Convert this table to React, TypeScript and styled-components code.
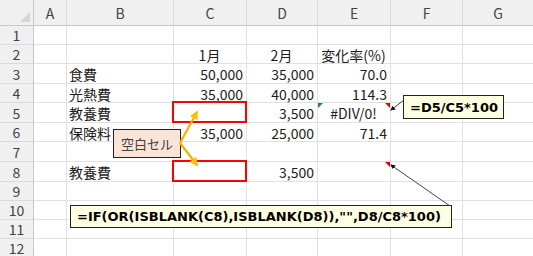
import { type FC } from "react"
import styled, { createGlobalStyle, css } from "styled-components"

const GlobalStyle = createGlobalStyle`
  html, body {
    margin: 0;
    padding: 0;
    background: #ffffff;
    overflow: hidden;
  }
`

const COLS = ["A", "B", "C", "D", "E", "F", "G"]
const ROW_HEIGHTS = [19, 19, 20, 19, 20, 19, 20, 20, 19, 19, 19, 19]

type Align = "left" | "right" | "center"

type CellData = {
  text?: string
  align?: Align
  frame?: boolean
  comment?: boolean
  error?: boolean
}

// one entry per row, columns A..G
const DATA: CellData[][] = [
  [],
  [{}, {}, { text: "1月", align: "center" }, { text: "2月", align: "center" }, { text: "変化率(%)", align: "center" }],
  [{}, { text: "食費" }, { text: "50,000", align: "right" }, { text: "35,000", align: "right" }, { text: "70.0", align: "right" }],
  [{}, { text: "光熱費" }, { text: "35,000", align: "right" }, { text: "40,000", align: "right" }, { text: "114.3", align: "right" }],
  [
    {},
    { text: "教養費" },
    { frame: true },
    { text: "3,500", align: "right" },
    { text: "#DIV/0!", align: "center", comment: true, error: true },
  ],
  [{}, { text: "保険料" }, { text: "35,000", align: "right" }, { text: "25,000", align: "right" }, { text: "71.4", align: "right" }],
  [],
  [{}, { text: "教養費" }, { frame: true }, { text: "3,500", align: "right" }, { comment: true }],
  [],
  [],
  [],
  [],
]

const Sheet = styled.div`
  position: relative;
  display: grid;
  grid-template-columns: 34px 33px 107px 73px 71px 73px 72px 71px;
  grid-template-rows: 26px ${ROW_HEIGHTS.map(h => `${h}px`).join(" ")};
  width: 534px;
  font-family: "Noto Sans CJK JP", "Noto Sans", sans-serif;
`

const Corner = styled.div`
  position: relative;
  background: #f0f0f0;
  border-right: 1px solid #c8c8c8;
  border-bottom: 1px solid #c8c8c8;

  &::after {
    content: "";
    position: absolute;
    right: 3px;
    bottom: 3px;
    border-left: 10px solid transparent;
    border-bottom: 10px solid #d6d6d6;
  }
`

const ColHead = styled.div`
  display: flex;
  align-items: center;
  justify-content: center;
  background: #f0f0f0;
  border-right: 1px solid #dadada;
  border-bottom: 1px solid #c8c8c8;
  color: #444444;
  font-size: 14px;
  padding-top: 1px;
`

const RowHead = styled.div`
  display: flex;
  align-items: center;
  justify-content: center;
  background: #f0f0f0;
  border-right: 1px solid #c8c8c8;
  border-bottom: 1px solid #dadada;
  color: #444444;
  font-size: 14px;
`

const Cell = styled.div<{ $align: Align; $frame?: boolean; $comment?: boolean }>`
  position: relative;
  display: flex;
  align-items: center;
  justify-content: ${p => (p.$align === "right" ? "flex-end" : p.$align === "center" ? "center" : "flex-start")};
  padding: 1px 3px 0 2px;
  border-right: 1px solid #e1e1e1;
  border-bottom: 1px solid #e1e1e1;
  color: #1c1c1c;
  font-size: 14px;
  white-space: nowrap;

  ${p =>
    p.$frame &&
    css`
      &::after {
        content: "";
        position: absolute;
        left: -2px;
        top: -2px;
        right: -1px;
        bottom: -1px;
        border: 2px solid #ff0000;
        z-index: 1;
      }
    `}

  ${p =>
    p.$comment &&
    css`
      &::before {
        content: "";
        position: absolute;
        top: 0;
        right: 0;
        border-left: 5px solid transparent;
        border-top: 5px solid #e00000;
      }
    `}
`

const ErrorMark = styled.span`
  position: absolute;
  top: 0;
  left: 0;
  border-right: 5px solid transparent;
  border-top: 5px solid #1e8c2e;
`

const Callout = styled.div<{ $tone: "note" | "peach" }>`
  position: absolute;
  z-index: 2;
  box-sizing: border-box;
  display: flex;
  align-items: center;
  border: 1px solid #222222;
  white-space: nowrap;

  ${p =>
    p.$tone === "note"
      ? css`
          background: #ffffe1;
          color: #000000;
          font-family: "DejaVu Sans", sans-serif;
          font-weight: bold;
          font-size: 13px;
          padding: 0 6px;
        `
      : css`
          background: #fbe3d6;
          color: #404040;
          font-family: "Noto Sans CJK JP", sans-serif;
          font-size: 13px;
          justify-content: center;
        `}
`

const Overlay = styled.svg`
  position: absolute;
  left: 0;
  top: 0;
  z-index: 3;
  pointer-events: none;
`

const Row: FC<{ index: number }> = ({ index }) => {
  const cells = DATA[index] || []
  return (
    <>
      <RowHead>{index + 1}</RowHead>
      {COLS.map((c, i) => {
        const cell = cells[i] || {}
        return (
          <Cell key={c} $align={cell.align || "left"} $frame={cell.frame} $comment={cell.comment}>
            {cell.error && <ErrorMark />}
            {cell.text}
          </Cell>
        )
      })}
    </>
  )
}

const App: FC = () => {
  return (
    <>
      <GlobalStyle />
      <Sheet>
        <Corner />
        {COLS.map(c => (
          <ColHead key={c}>{c}</ColHead>
        ))}
        {ROW_HEIGHTS.map((_, r) => (
          <Row key={r} index={r} />
        ))}

        <Callout $tone="peach" style={{ left: 113, top: 129, width: 68, height: 29 }}>
          空白セル
        </Callout>
        <Callout $tone="note" style={{ left: 403, top: 95, width: 101, height: 24 }}>
          =D5/C5*100
        </Callout>
        <Callout $tone="note" style={{ left: 70, top: 205, width: 382, height: 23 }}>
          =IF(OR(ISBLANK(C8),ISBLANK(D8)),"",D8/C8*100)
        </Callout>

        <Overlay width="533" height="256" viewBox="0 0 533 256">
          <defs>
            <marker id="gold" viewBox="0 0 10 10" refX="8" refY="5" markerWidth="4" markerHeight="4" orient="auto">
              <path d="M0 0 L10 5 L0 10 z" fill="#ffc000" />
            </marker>
            <marker id="dark" viewBox="0 0 10 10" refX="8" refY="5" markerWidth="5" markerHeight="5" orient="auto">
              <path d="M0 0 L10 5 L0 10 z" fill="#111111" />
            </marker>
          </defs>
          <line x1="180" y1="143" x2="197" y2="112" stroke="#f2b200" strokeWidth="2.2" markerEnd="url(#gold)" />
          <line x1="180" y1="143" x2="197" y2="165" stroke="#f2b200" strokeWidth="2.2" markerEnd="url(#gold)" />
          <line x1="404" y1="100" x2="391" y2="110" stroke="#444444" strokeWidth="1" markerEnd="url(#dark)" />
          <line x1="450" y1="206" x2="391" y2="165" stroke="#444444" strokeWidth="1" markerEnd="url(#dark)" />
        </Overlay>
      </Sheet>
    </>
  )
}

export default App
